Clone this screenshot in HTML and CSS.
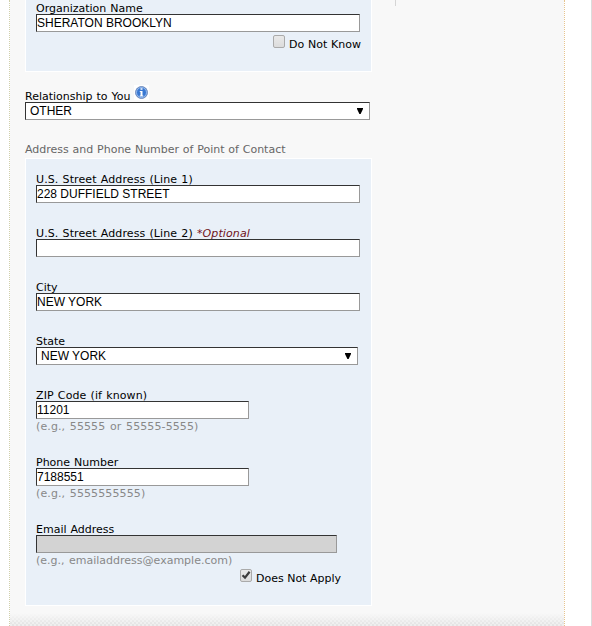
FILE: index.html
```html
<!DOCTYPE html>
<html lang="en">
<head>
<meta charset="utf-8">
<title>Point of Contact</title>
<link rel="stylesheet" href="styles.css">
</head>
<body>
<div class="page">
<main class="content">
  <form class="form">
    <section class="panel panel-org">
      <div class="field"><label class="label">Organization Name</label><div class="box">SHERATON BROOKLYN</div></div>
      <div class="check-row"><span class="check"></span><span class="label">Do Not Know</span></div>
    </section>
    <div class="relationship">
      <div class="label-row"><label class="label">Relationship to You</label>
        <svg class="info" viewBox="0 0 15 15"><rect width="15" height="15" fill="#fff"/><circle cx="7.5" cy="7.5" r="6" fill="#3978d2" stroke="#7a91bd"/><circle cx="7.5" cy="7.5" r="5" fill="none" stroke="#aecdf5" stroke-width=".8"/><path d="M6.5 3.2h2v1.6h-2zM5.8 6h2.7v4.4h.8v1.1H5.7v-1.1h.8V7h-.7z" fill="#fff"/></svg>
      </div>
      <div class="box select"><span>OTHER</span><svg class="arrow" viewBox="0 0 6 6"><path d="M0 0h6v1L3.6 6H2.4L0 1z"/></svg></div>
    </div>
    <h2 class="legend">Address and Phone Number of Point of Contact</h2>
    <section class="panel panel-address">
      <div class="field"><label class="label spaced">U.S. Street Address (Line 1)</label><div class="box">228 DUFFIELD STREET</div></div>
      <div class="field"><label class="label spaced">U.S. Street Address (Line 2) <em class="optional">*Optional</em></label><div class="box"></div></div>
      <div class="field"><label class="label">City</label><div class="box">NEW YORK</div></div>
      <div class="field"><label class="label">State</label><div class="box select state"><span>NEW YORK</span><svg class="arrow" viewBox="0 0 6 6"><path d="M0 0h6v1L3.6 6H2.4L0 1z"/></svg></div></div>
      <div class="field"><label class="label spaced">ZIP Code (if known)</label><div class="box short">11201</div><div class="hint spaced">(e.g., 55555 or 55555-5555)</div></div>
      <div class="field"><label class="label">Phone Number</label><div class="box short">7188551</div><div class="hint spaced">(e.g., 5555555555)</div></div>
      <div class="field"><label class="label">Email Address</label><div class="box email"></div><div class="hint">(e.g., emailaddress@example.com)</div></div>
      <div class="check-row apply"><span class="check"><svg viewBox="0 0 10 10"><path d="M1.5 5.2L4 7.6L8.6 1.8" fill="none" stroke="#3c3c3c" stroke-width="2.2"/></svg></span><span class="label">Does Not Apply</span></div>
    </section>
  </form>
  <div class="side-rule"></div>
</main>
</div>
</body>
</html>
```
FILE: styles.css
```css
* { box-sizing: border-box; }
body { margin: 0; background: #fff; overflow: hidden; font: 11px/13px "DejaVu Sans", sans-serif; color: #000; }
.page { height: 626px; padding: 0 26px 0 9px; border-right: 1px solid #dcdcdc; }
.content {
  display: flex;
  width: 556px;
  height: 626px;
  border-left: 1px dotted #d0cfaa;
  border-right: 1px dotted #e6c48e;
  background:
    linear-gradient(#f8f8f8 0 613px, rgba(248, 248, 248, 0.15) 626px),
    conic-gradient(#dedede 25%, #ececec 0 50%, #dedede 0 75%, #ececec 0) 0 0 / 4px 4px;
  background-clip: padding-box;
}
.form { width: 347px; margin-left: 15px; }
.side-rule { width: 1px; height: 6px; margin-left: 23px; background: #d5d5d5; }
.panel { border: 1px solid #fff; background: #e9f0f8; padding-left: 10px; }
.panel-org { height: 72px; border-top: 0; padding-top: 1px; }
.panel-address { height: 448px; margin-top: 3px; padding-top: 13px; }
.label, .hint, .legend { white-space: nowrap; }
.label { display: block; height: 13px; line-height: 15px; word-spacing: 0.5px; }
.spaced { letter-spacing: 0.11px; }
.field { margin-bottom: 23px; }
.box {
  width: 324px;
  height: 18px;
  border: 1px solid;
  border-color: #333 #999 #999 #333;
  background: #fff;
  font: 12px/16px "Liberation Sans", Arial, sans-serif;
  white-space: nowrap;
}
.select { display: flex; justify-content: space-between; padding: 0 6px 0 4px; width: 345px; }
.state { width: 322px; }
.short { width: 213px; }
.email { width: 301px; background: #d3d3d3; }
.arrow { width: 6px; height: 6px; margin-top: 5px; }
.hint { height: 13px; line-height: 16px; color: #888; word-spacing: 1px; }
.optional { color: #701018; }
.panel-org .field, .panel-address .field:nth-last-child(2) { margin-bottom: 3px; }
.check-row { display: flex; justify-content: flex-end; width: 325px; height: 16px; gap: 4px; }
.check-row .label { padding-top: 3px; line-height: 13px; word-spacing: 0; }
.panel-org .check-row .label { word-spacing: 0.3px; }
.apply { width: 305px; }
.check { width: 12px; height: 13px; border: 1px solid #aaa; border-radius: 2px; background: linear-gradient(#e9e9e9, #dcdcdc); }
.check svg { display: block; width: 10px; height: 10px; }
.relationship { margin-top: 13px; }
.label-row { display: flex; align-items: flex-start; height: 17px; }
.label-row .label { margin-top: 4px; }
.info { width: 15px; height: 15px; margin-left: 3px; }
.legend { height: 13px; margin: 22px 0 0; font-size: 11px; line-height: 15px; font-weight: normal; color: #666; word-spacing: 0.28px; }
```
